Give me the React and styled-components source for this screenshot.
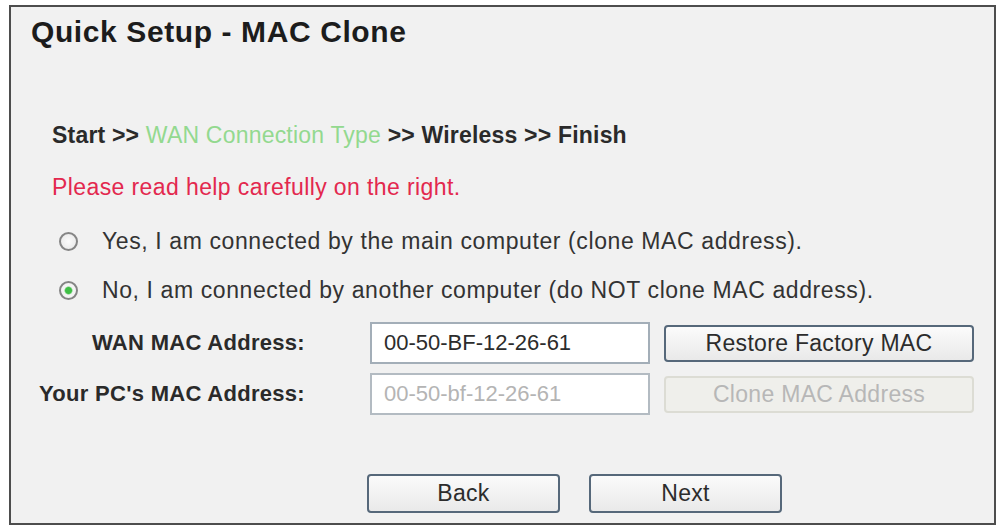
import React, { useState } from "react";
import styled, { createGlobalStyle } from "styled-components";

const GlobalStyle = createGlobalStyle`
  html, body {
    margin: 0;
    padding: 0;
    background: #ffffff;
  }
  body {
    font-family: "Liberation Sans", Arial, sans-serif;
  }
`;

const Panel = styled.div`
  margin: 5px 4px 4px 9px;
  height: 516px;
  border: 2px solid #4d4d4d;
  background: #f1f1f1;
  display: flex;
  flex-direction: column;
  color: #333;
`;

const Title = styled.h1`
  margin: 7px 0 0 20px;
  font-size: 30px;
  line-height: 36px;
  font-weight: bold;
  letter-spacing: 0.6px;
  color: #1c1c1c;
`;

const Line = styled.div`
  margin: ${(p) => p.$top}px 0 0 41px;
  font-size: 23px;
  line-height: 30px;
  letter-spacing: ${(p) => p.$spacing ?? 0.4}px;
  color: ${(p) => p.$color || "#333"};
  white-space: nowrap;
`;

const Step = styled.span`
  font-weight: ${(p) => (p.$active ? "normal" : "bold")};
  color: ${(p) => (p.$active ? "#93d98f" : "#2a2a2a")};
`;

const RadioRow = styled.label`
  margin: ${(p) => p.$top}px 0 0 48px;
  display: flex;
  align-items: center;
  gap: 24px;
  font-size: 23px;
  line-height: 30px;
  letter-spacing: 0.6px;
  color: #333;
  white-space: nowrap;
  cursor: pointer;
`;

const Radio = styled.input.attrs({ type: "radio" })`
  appearance: none;
  flex: none;
  box-sizing: border-box;
  margin: 0;
  width: 19px;
  height: 19px;
  border-radius: 50%;
  border: 2px solid #858585;
  background: radial-gradient(circle, #fbfbfb 0%, #e6e6e6 100%);
  cursor: pointer;

  &:checked {
    background: radial-gradient(circle, #3fbf45 0 3px, #f4f4f4 4.5px);
  }
`;

const FormGrid = styled.div`
  margin-top: 17px;
  display: grid;
  grid-template-columns: 345px 280px 310px;
  column-gap: 14px;
  row-gap: 9px;
  align-items: center;
`;

const Label = styled.div`
  padding-right: 51px;
  text-align: right;
  font-size: 22px;
  font-weight: bold;
  letter-spacing: 0.3px;
  color: #2a2a2a;
  white-space: nowrap;
`;

const MacInput = styled.input`
  box-sizing: border-box;
  height: 42px;
  width: 100%;
  padding: 0 12px;
  border: 2px solid #a3aeb8;
  background: #fff;
  font-family: "Liberation Sans", Arial, sans-serif;
  font-size: 22px;
  color: #2c2c2c;
  outline: none;

  &:disabled {
    color: #b4b4b4;
    border-color: #b3bbc2;
  }
`;

const Button = styled.button`
  box-sizing: border-box;
  height: ${(p) => p.$h || 37}px;
  width: ${(p) => (p.$w ? `${p.$w}px` : "100%")};
  border: 2px solid #56687a;
  border-radius: 4px;
  background: linear-gradient(#fbfbfb, #e9e9e9);
  font-family: "Liberation Sans", Arial, sans-serif;
  font-size: 23px;
  letter-spacing: 0.3px;
  color: #2c2c2c;
  cursor: pointer;

  &:disabled {
    border-color: #dcdcd4;
    background: #efefeb;
    color: #b7b7b7;
    cursor: default;
  }
`;

const Actions = styled.div`
  margin: auto 0 10px 356px;
  display: flex;
  gap: 29px;
`;

export default function App() {
  const [clone, setClone] = useState(false);

  return (
    <>
      <GlobalStyle />
      <Panel>
        <Title>Quick Setup - MAC Clone</Title>

        <Line $top={70} $spacing={0.2}>
          <Step>Start &gt;&gt; </Step>
          <Step $active>WAN Connection Type</Step>
          <Step> &gt;&gt; Wireless &gt;&gt; Finish</Step>
        </Line>

        <Line $top={22} $color="#e3284e">
          Please read help carefully on the right.
        </Line>

        <RadioRow $top={24}>
          <Radio name="clone" checked={clone} onChange={() => setClone(true)} />
          Yes, I am connected by the main computer (clone MAC address).
        </RadioRow>
        <RadioRow $top={19}>
          <Radio name="clone" checked={!clone} onChange={() => setClone(false)} />
          No, I am connected by another computer (do NOT clone MAC address).
        </RadioRow>

        <FormGrid>
          <Label>WAN MAC Address:</Label>
          <MacInput defaultValue="00-50-BF-12-26-61" />
          <Button>Restore Factory MAC</Button>

          <Label>Your PC's MAC Address:</Label>
          <MacInput value="00-50-bf-12-26-61" disabled readOnly />
          <Button disabled>Clone MAC Address</Button>
        </FormGrid>

        <Actions>
          <Button $w={193} $h={39}>Back</Button>
          <Button $w={193} $h={39}>Next</Button>
        </Actions>
      </Panel>
    </>
  );
}
